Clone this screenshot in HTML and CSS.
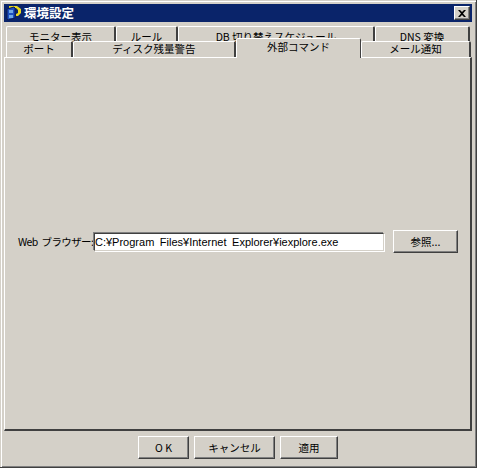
FILE: index.html
```html
<!DOCTYPE html>
<html lang="ja">
<head>
<meta charset="utf-8">
<title>環境設定</title>
<link rel="stylesheet" href="styles.css">
</head>
<body>
<div class="window">
  <div class="titlebar">
    <svg class="app-icon" width="16" height="16" viewBox="0 0 16 16">
      <path d="M3 1h8l4 3v4l-3 3h-2V9l2-1V5l-2-2H3z" fill="#e8d820"/>
      <path d="M1 4l7-2 1 1v10l-7 2-1-1z" fill="#1c4fc0" stroke="#0a1a50" stroke-width="1"/>
      <path d="M3 5h4v3H3zM3 10h4v3H3z" fill="#6ea8e8"/>
    </svg>
    <span class="title-text">環境設定</span>
    <span class="close-btn">
      <svg width="8" height="7" viewBox="0 0 8 7"><path d="M0 0h2l2 2 2-2h2L5 3.500 8 7H6L4 5 2 7H0l3-3.500z" fill="#000"/></svg>
    </span>
  </div>
  <div class="tabs">
    <div class="tab-row back">
      <div class="tab t-monitor">モニター表示</div>
      <div class="tab t-rule">ルール</div>
      <div class="tab t-db">DB 切り替えスケジュール</div>
      <div class="tab t-dns">DNS 変換</div>
    </div>
    <div class="tab-row front">
      <div class="tab t-port">ポート</div>
      <div class="tab t-disk">ディスク残量警告</div>
      <div class="tab t-ext selected">外部コマンド</div>
      <div class="tab t-mail">メール通知</div>
    </div>
  </div>
  <div class="panel">
    <label class="field-label">Web ブラウザー:</label>
    <div class="text-input">C:¥Program Files¥Internet Explorer¥iexplore.exe</div>
    <button class="btn browse">参照...</button>
  </div>
  <div class="footer">
    <button class="btn ok">O K</button>
    <button class="btn cancel">キャンセル</button>
    <button class="btn apply">適用</button>
  </div>
</div>
</body>
</html>
```
FILE: styles.css
```css
* { box-sizing: border-box; }
html, body { margin: 0; padding: 0; }
body {
  width: 477px;
  height: 468px;
  overflow: hidden;
  background: #d4d0c8;
  font-family: "Noto Sans CJK JP", "Liberation Sans", sans-serif;
  font-size: 10.5px;
  color: #000;
}
.window {
  width: 477px;
  height: 468px;
  padding: 4px 4px 2px 4px;
  background: #d4d0c8;
  border-right: 1px solid #404040;
  border-bottom: 1px solid #404040;
  box-shadow: inset 1px 1px 0 #d4d0c8, inset 2px 2px 0 #fff, inset -1px -1px 0 #808080;
  display: flex;
  flex-direction: column;
}
.titlebar {
  height: 18px;
  flex: none;
  background: #0a246a;
  display: flex;
  align-items: center;
  padding: 0 2px;
  color: #fff;
  font-weight: 700;
  font-size: 12.500px;
}
.app-icon { flex: none; margin-right: 2px; }
.title-text { flex: 1; line-height: 18px; }
.close-btn {
  width: 16px;
  height: 14px;
  background: #d4d0c8;
  border: 1px solid;
  border-color: #fff #404040 #404040 #fff;
  box-shadow: inset -1px -1px 0 #808080;
  display: flex;
  align-items: center;
  justify-content: center;
}
.close-btn svg { display: block; }
.tabs {
  flex: none;
  height: 35px;
  position: relative;
  padding-top: 4px;
}
.tab-row { display: flex; }
.back { height: 16px; margin-left: 2px; overflow: hidden; align-items: flex-start; }
.front { height: 16px; margin-left: 2px; margin-top: -1px; align-items: flex-end; position: relative; }
.tab {
  flex: none;
  text-align: center;
  white-space: nowrap;
  background: #d4d0c8;
  border-top: 1px solid #fff;
  border-left: 1px solid #fff;
  border-right: 2px solid #404040;
  border-top-left-radius: 2px;
  border-top-right-radius: 2px;
  line-height: 15px;
}
.back .tab { height: 24px; padding-top: 2px; line-height: 16px; }
.front .tab { height: 16px; line-height: 14px; }
.t-monitor { width: 110px; }
.t-rule { width: 62px; }
.t-db { width: 197px; }
.t-dns { width: 95px; }
.t-port { width: 67px; }
.t-disk { width: 163px; }
.t-ext { width: 125px; }
.t-mail { width: 110px; }
.front .selected {
  height: 20px;
  margin-bottom: -1px;
  position: relative;
  z-index: 2;
  border-right-width: 1px;
  line-height: 16px;
  padding-bottom: 3px;
}
.panel {
  flex: none;
  height: 374px;
  width: 468px;
  border-top: 1px solid #fff;
  border-left: 1px solid #fff;
  border-right: 2px solid #404040;
  border-bottom: 2px solid #404040;
  display: flex;
  align-items: center;
  padding-left: 13px;
  padding-bottom: 4px;
}
.field-label { width: 76px; flex: none; white-space: nowrap; word-spacing: 2px; letter-spacing: -0.6px; }
.text-input {
  width: 290px;
  height: 18px;
  flex: none;
  background: #fff;
  border: 1px solid;
  border-color: #404040 #d4d0c8 #d4d0c8 #404040;
  box-shadow: 1px 1px 0 #fff, -1px -1px 0 #808080;
  font-family: "Liberation Sans", sans-serif;
  font-size: 11px;
  line-height: 16px;
  word-spacing: 2.500px;
  white-space: nowrap;
  overflow: hidden;
}
.btn {
  flex: none;
  padding: 0;
  background: #d4d0c8;
  border: 1px solid;
  border-color: #fff #404040 #404040 #fff;
  box-shadow: inset -1px -1px 0 #808080;
  font-family: inherit;
  font-size: 10.5px;
  color: #000;
  height: 23px;
}
.browse { width: 65px; margin-left: 9px; }
.footer {
  flex: 1;
  display: flex;
  justify-content: center;
  gap: 5px;
  padding-top: 5px;
}
.ok { width: 51px; }
.cancel { width: 81px; }
.apply { width: 58px; }
```
